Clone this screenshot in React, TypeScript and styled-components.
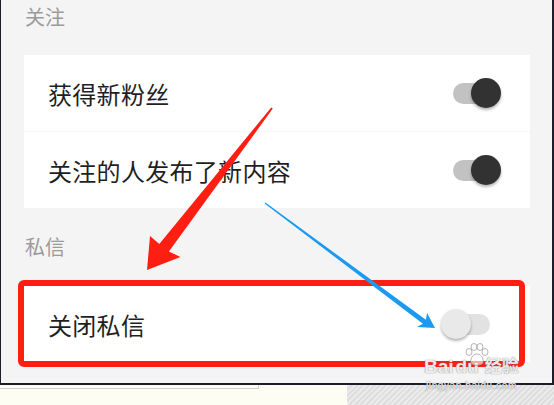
import React from 'react';
import styled, { createGlobalStyle } from 'styled-components';

const GlobalStyle = createGlobalStyle`
  html, body {
    margin: 0;
    padding: 0;
    background: #fdfdf4;
  }
  body {
    font-family: "Noto Sans CJK SC", "Noto Sans", sans-serif;
  }
`;

const Page = styled.div`
  position: relative;
  width: 554px;
  height: 405px;
  overflow: hidden;
`;

const Panel = styled.div`
  box-sizing: border-box;
  width: 554px;
  height: 385px;
  background: #f4f4f4;
  border-left: 1px solid #1c1c2a;
  border-right: 2px solid #1c1c2a;
  border-bottom: 2px solid #1c1c2a;
  padding: 0 22px 0 23px;
  display: flex;
  flex-direction: column;
`;

const SectionTitle = styled.div<{ $height: number; $top?: number }>`
  box-sizing: border-box;
  height: ${(p) => p.$height}px;
  display: flex;
  align-items: ${(p) => (p.$top !== undefined ? 'flex-start' : 'center')};
  padding-top: ${(p) => p.$top ?? 0}px;
  padding-left: 1px;
  font-size: 20px;
  line-height: 22px;
  color: #9b9b9b;
`;

const Card = styled.div`
  background: #fff;
  display: flex;
  flex-direction: column;
`;

const Row = styled.div<{ $divider?: boolean }>`
  height: 76px;
  display: flex;
  align-items: center;
  justify-content: space-between;
  padding: 0 29px 0 24px;
  border-bottom: ${(p) => (p.$divider ? '1px solid #f6f6f6' : 'none')};
`;

const Label = styled.span`
  font-size: 24px;
  color: #1f1f1f;
  letter-spacing: 0.3px;
`;

const Toggle = styled.div`
  position: relative;
  width: 60px;
  height: 30px;
`;

const Track = styled.div<{ $on: boolean }>`
  position: absolute;
  left: 12px;
  right: 11px;
  top: 5px;
  height: 21px;
  border-radius: 11px;
  background: ${(p) => (p.$on ? '#c2c2c2' : '#e2e2e2')};
`;

const Knob = styled.div<{ $on: boolean }>`
  position: absolute;
  top: 0;
  left: ${(p) => (p.$on ? '30px' : '0')};
  width: 30px;
  height: 30px;
  border-radius: 50%;
  background: ${(p) => (p.$on ? '#323232' : '#e9e9e9')};
  box-shadow: 0 2px 3px rgba(0, 0, 0, 0.3);
`;

const BottomStrip = styled.div`
  display: flex;
  height: 20px;
`;

const Ledge = styled.div`
  width: 258px;
  height: 3px;
  border-bottom: 1px solid #cfcfcf;
  border-right: 1px solid #cfcfcf;
`;

const Hatch = styled.div`
  margin-left: 88px;
  flex: 1;
  background: repeating-linear-gradient(
    -45deg,
    #dedede 0 2px,
    #ebebeb 2px 4px
  );
`;

const Highlight = styled.div`
  position: absolute;
  left: 18px;
  top: 280px;
  width: 507px;
  height: 87px;
  box-sizing: border-box;
  border: 6px solid #ff1f12;
  border-radius: 6px;
`;

const Arrows = styled.svg`
  position: absolute;
  left: 0;
  top: 0;
  pointer-events: none;
`;

const Watermark = styled.div`
  position: absolute;
  left: 424px;
  top: 343px;
  width: 104px;
  color: rgba(255, 255, 255, 0.85);
  text-shadow: 0 0 1px rgba(120, 120, 120, 0.7), 0 0 1px rgba(120, 120, 120, 0.7);
  font-family: "Liberation Sans", "Noto Sans CJK SC", sans-serif;
`;

const MarkLine = styled.div`
  display: flex;
  align-items: flex-end;
  gap: 2px;
  font-size: 19px;
  font-weight: bold;
  line-height: 20px;
  margin-top: 14px;
`;

const MarkCjk = styled.span`
  font-size: 17px;
  margin-left: 4px;
`;

const MarkSite = styled.div`
  font-size: 10px;
  line-height: 12px;
  letter-spacing: 0.6px;
  margin-top: 3px;
  padding-left: 2px;
`;

const Paw = styled.svg`
  position: absolute;
  left: 40px;
  top: 0;
`;

function Switch({ on }: { on: boolean }) {
  return (
    <Toggle>
      <Track $on={on} />
      <Knob $on={on} />
    </Toggle>
  );
}

export default function App() {
  return (
    <Page>
      <GlobalStyle />
      <Panel>
        <SectionTitle $height={55} $top={6}>关注</SectionTitle>
        <Card>
          <Row $divider>
            <Label>获得新粉丝</Label>
            <Switch on />
          </Row>
          <Row>
            <Label>关注的人发布了新内容</Label>
            <Switch on />
          </Row>
        </Card>
        <SectionTitle $height={78}>私信</SectionTitle>
        <Card>
          <Row>
            <Label>关闭私信</Label>
            <Switch on={false} />
          </Row>
        </Card>
      </Panel>
      <BottomStrip>
        <Ledge />
        <Hatch />
      </BottomStrip>

      <Highlight />

      <Watermark>
        <Paw width="26" height="24" viewBox="0 0 26 24">
          <g fill="rgba(255,255,255,0.6)" stroke="rgba(130,130,130,0.6)" strokeWidth="1">
            <ellipse cx="5" cy="9" rx="3" ry="3.5" />
            <ellipse cx="10" cy="4" rx="3" ry="3.5" />
            <ellipse cx="16" cy="4" rx="3" ry="3.5" />
            <ellipse cx="21" cy="9" rx="3" ry="3.5" />
            <path d="M13 11 C8 11 6 17 7 20 C8 23 18 23 19 20 C20 17 18 11 13 11 Z" />
          </g>
        </Paw>
        <MarkLine>
          <span>Bai</span>
          <span>du</span>
          <MarkCjk>经验</MarkCjk>
        </MarkLine>
        <MarkSite>jingyan.baidu.com</MarkSite>
      </Watermark>

      <Arrows width="554" height="405" viewBox="0 0 554 405">
        <polygon
          fill="#ff1f12"
          points="271.2,107.4 159.3,244.1 150,236 147,270 180.5,257 168.9,251.5 272.8,108.6"
        />
        <polygon
          fill="#1a9af2"
          points="265.4,202.4 425.9,319.8 427.1,313.1 435,328 416.9,326.9 422.9,323.8 264.6,203.6"
        />
      </Arrows>
    </Page>
  );
}
